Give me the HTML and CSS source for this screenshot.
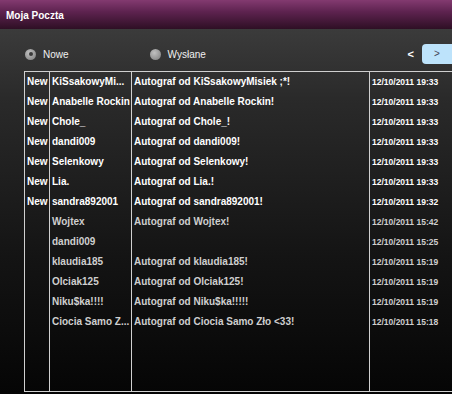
FILE: index.html
```html
<!DOCTYPE html>
<html lang="pl">
<head>
  <meta charset="UTF-8">
  <title>Moja Poczta</title>
  <link rel="stylesheet" href="styles.css">
</head>
<body>
  <div class="window">
    <div class="titlebar">Moja Poczta</div>
    <div class="toolbar">
      <label class="radio"><span class="dot checked"></span>Nowe</label>
      <label class="radio"><span class="dot"></span>Wysłane</label>
      <span class="spacer"></span>
      <span class="prev">&lt;</span>
      <span class="next">&gt;</span>
    </div>
    <div class="list">
      <table class="mails">
        <colgroup>
          <col class="c-new"><col class="c-from"><col class="c-subj"><col class="c-date">
        </colgroup>
        <tr><td>New</td><td>KiSsakowyMi...</td><td>Autograf od KiSsakowyMisiek ;*!</td><td class="date">12/10/2011 19:33</td></tr>
        <tr><td>New</td><td>Anabelle Rockin</td><td>Autograf od Anabelle Rockin!</td><td class="date">12/10/2011 19:33</td></tr>
        <tr><td>New</td><td>Chole_</td><td>Autograf od Chole_!</td><td class="date">12/10/2011 19:33</td></tr>
        <tr><td>New</td><td>dandi009</td><td>Autograf od dandi009!</td><td class="date">12/10/2011 19:33</td></tr>
        <tr><td>New</td><td>Selenkowy</td><td>Autograf od Selenkowy!</td><td class="date">12/10/2011 19:33</td></tr>
        <tr><td>New</td><td>Lia.</td><td>Autograf od Lia.!</td><td class="date">12/10/2011 19:33</td></tr>
        <tr><td>New</td><td>sandra892001</td><td>Autograf od sandra892001!</td><td class="date">12/10/2011 19:32</td></tr>
        <tr class="read"><td></td><td>Wojtex</td><td>Autograf od Wojtex!</td><td class="date">12/10/2011 15:42</td></tr>
        <tr class="read"><td></td><td>dandi009</td><td></td><td class="date">12/10/2011 15:25</td></tr>
        <tr class="read"><td></td><td>klaudia185</td><td>Autograf od klaudia185!</td><td class="date">12/10/2011 15:19</td></tr>
        <tr class="read"><td></td><td>Olciak125</td><td>Autograf od Olciak125!</td><td class="date">12/10/2011 15:19</td></tr>
        <tr class="read"><td></td><td>Niku$ka!!!!</td><td>Autograf od Niku$ka!!!!!</td><td class="date">12/10/2011 15:19</td></tr>
        <tr class="read"><td></td><td>Ciocia Samo Z...</td><td>Autograf od Ciocia Samo Zło &lt;33!</td><td class="date">12/10/2011 15:18</td></tr>
        <tr class="filler"><td></td><td></td><td></td><td></td></tr>
      </table>
    </div>
  </div>
</body>
</html>
```

FILE: styles.css
```css
/*
 *  Page frame.
 */
html, body{
  margin: 0;
  padding: 0;
  overflow: hidden;
}
body{
  width: 452px;
  height: 394px;
  font-family: "Liberation Sans", Arial, sans-serif;
  background: linear-gradient(#424242, #2a2a2a 25%, #141414 65%, #050505);
  color: #fff;
}
.window{
  display: flex;
  flex-direction: column;
  height: 394px;
}
.titlebar{
  height: 29px;
  box-sizing: border-box;
  padding: 10px 0 0 6px;
  font-size: 10px;
  font-weight: bold;
  background: linear-gradient(#833a70, #5e2350 40%, #2e0f24);
}

/*
 *  Radios and paging.
 */
.toolbar{
  display: flex;
  align-items: center;
  height: 42px;
  box-sizing: border-box;
  padding: 8px 0 0 25px;
  font-size: 10px;
}
.radio{
  display: flex;
  align-items: center;
  gap: 7px;
  margin-right: 81px;
  color: #f0f0f0;
}
.dot{
  width: 11px;
  height: 11px;
  border-radius: 50%;
  background: radial-gradient(circle at 40% 35%, #c0c0c0, #7a7a7a);
  position: relative;
}
.dot.checked::after{
  content: "";
  position: absolute;
  left: 3.5px;
  top: 3.5px;
  width: 4px;
  height: 4px;
  border-radius: 50%;
  background: #3a3a3a;
}
.spacer{
  flex: 1;
}
.prev{
  font-weight: bold;
  font-size: 11px;
  margin-right: 8px;
}
.next{
  width: 30px;
  height: 20px;
  line-height: 19px;
  text-align: center;
  font-size: 10px;
  color: #445;
  background: #bde3fb;
  border-radius: 4px 0 0 4px;
}

/*
 *  Mail list.
 */
.list{
  margin-left: 24px;
  height: 321px;
}
.mails{
  border-collapse: collapse;
  table-layout: fixed;
  width: 440px;
  height: 321px;
  font-size: 10px;
  font-weight: bold;
  border: solid #d0d0d0 1px;
}
.c-new{ width: 25px; }
.c-from{ width: 82px; }
.c-subj{ width: 238px; }
.c-date{ width: 95px; }
.mails td{
  height: 20px;
  padding: 0 0 0 2px;
  border-left: solid #d0d0d0 1px;
  border-right: solid #d0d0d0 1px;
  white-space: nowrap;
  overflow: hidden;
  vertical-align: middle;
  line-height: 20px;
}
.mails td.date{
  font-size: 8.5px;
}
.mails .read td{
  color: #cfcfcf;
}
.mails .filler td{
  height: auto;
}
```
